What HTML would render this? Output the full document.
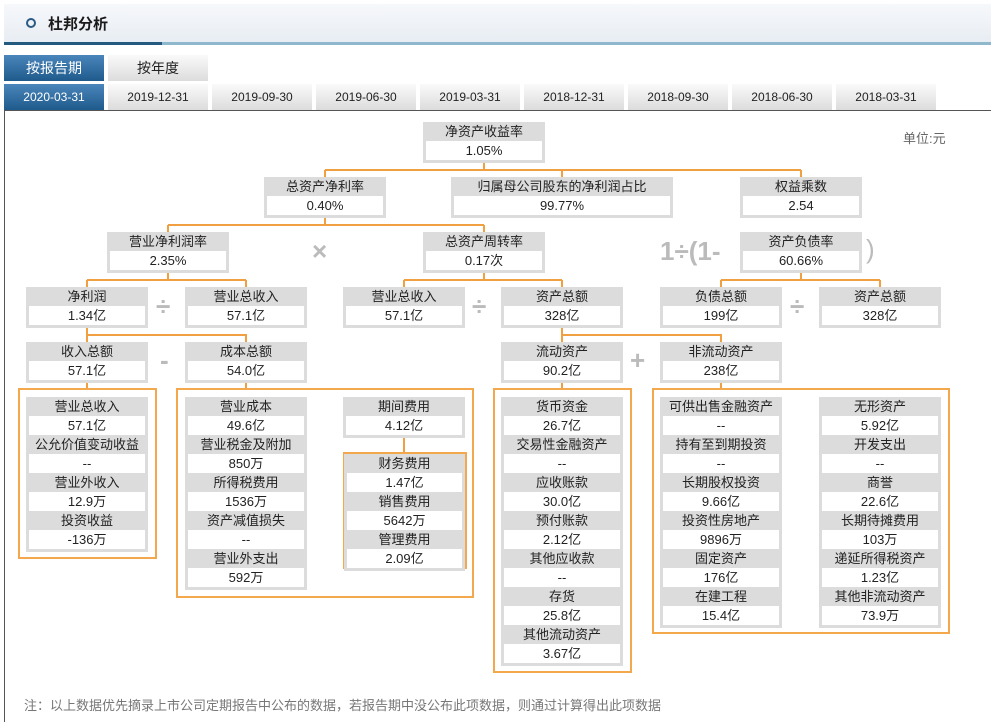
<!DOCTYPE html>
<html><head><meta charset="utf-8"><style>
*{margin:0;padding:0;box-sizing:border-box}
body{width:991px;height:728px;background:#fff;font-family:"Liberation Sans","Noto Sans CJK SC",sans-serif;font-size:13px;color:#222;position:relative;overflow:hidden}
.hd{position:absolute;left:4px;top:4px;width:987px;height:38px;background:linear-gradient(#f6f8fb,#e8edf3)}
.hd b{position:absolute;left:44px;top:9px;font-size:15px;color:#1a1a1a}
.hd i{position:absolute;left:22px;top:14px;width:10px;height:10px;border:2px solid #2a5a86;border-radius:50%}
.ln1{position:absolute;left:4px;top:42px;width:158px;height:3px;background:#245a80}
.ln2{position:absolute;left:162px;top:42px;width:829px;height:3px;background:#8fb8cc}
.t{position:absolute;height:26px;width:100px;text-align:center;line-height:26px;background:linear-gradient(#fafafa,#dcdcdc);color:#222;font-size:14px}
.t.s{background:linear-gradient(#4a86bb,#1f5a8c);color:#fff}
.t2{font-size:12px;height:26px;line-height:27px}
.main{position:absolute;left:4px;top:110px;width:987px;height:612px;border-left:1px solid #555;border-top:1px solid #555}
.b{position:absolute;width:122px;background:#dcdcdc;padding:0 3px 3px;text-align:center}
.b .l{height:19px;line-height:20px}
.b .v{height:19px;line-height:19px;background:#fff}
.op{position:absolute;font-size:26px;color:#bbb;font-weight:bold}
.ob{position:absolute;border:2px solid #f4a84e}
</style></head><body>
<div class="hd"><i></i><b>杜邦分析</b></div>
<div class="ln1"></div><div class="ln2"></div>
<div class="t s" style="left:4px;top:55px">按报告期</div>
<div class="t" style="left:108px;top:55px">按年度</div>
<div class="t t2 s" style="left:4px;top:84px">2020-03-31</div>
<div class="t t2" style="left:108px;top:84px">2019-12-31</div>
<div class="t t2" style="left:212px;top:84px">2019-09-30</div>
<div class="t t2" style="left:316px;top:84px">2019-06-30</div>
<div class="t t2" style="left:420px;top:84px">2019-03-31</div>
<div class="t t2" style="left:524px;top:84px">2018-12-31</div>
<div class="t t2" style="left:628px;top:84px">2018-09-30</div>
<div class="t t2" style="left:732px;top:84px">2018-06-30</div>
<div class="t t2" style="left:836px;top:84px">2018-03-31</div>
<div class="main"></div>
<div style="position:absolute;left:903px;top:128px;color:#666">单位:元</div>
<svg style="position:absolute;left:0;top:0" width="991" height="728"><g stroke="#f0a040" stroke-width="2" fill="none">
<path d="M484 162V170M325 170H801M325 170V177M562 170V177M801 170V177"/>
<path d="M325 217V225M168 225H484M168 225V232M484 225V232"/>
<path d="M168 272V280M87 280H246M87 280V287M246 280V287"/>
<path d="M484 272V280M404 280H562M404 280V287M562 280V287"/>
<path d="M801 272V280M721 280H880M721 280V287M880 280V287"/>
<path d="M87 327V335H246V342M87 335V342"/>
<path d="M562 327V335H721V342M562 335V342"/>
<path d="M87 382V389M246 382V389M562 382V389M721 382V389M404 435V452"/>
</g></svg>
<div class="b" style="left:423px;top:122px"><div class="l">净资产收益率</div><div class="v">1.05%</div></div>
<div class="b" style="left:264px;top:177px"><div class="l">总资产净利率</div><div class="v">0.40%</div></div>
<div class="b" style="left:451px;top:177px;width:222px"><div class="l">归属母公司股东的净利润占比</div><div class="v">99.77%</div></div>
<div class="b" style="left:740px;top:177px"><div class="l">权益乘数</div><div class="v">2.54</div></div>
<div class="b" style="left:107px;top:232px"><div class="l">营业净利润率</div><div class="v">2.35%</div></div>
<div class="b" style="left:423px;top:232px"><div class="l">总资产周转率</div><div class="v">0.17次</div></div>
<div class="b" style="left:740px;top:232px"><div class="l">资产负债率</div><div class="v">60.66%</div></div>
<div class="op" style="left:312px;top:236px">×</div>
<div class="op" style="left:660px;top:236px">1÷(1-</div>
<div class="op" style="left:866px;top:234px;font-weight:normal">)</div>
<div class="b" style="left:26px;top:287px"><div class="l">净利润</div><div class="v">1.34亿</div></div>
<div class="b" style="left:185px;top:287px"><div class="l">营业总收入</div><div class="v">57.1亿</div></div>
<div class="b" style="left:343px;top:287px"><div class="l">营业总收入</div><div class="v">57.1亿</div></div>
<div class="b" style="left:501px;top:287px"><div class="l">资产总额</div><div class="v">328亿</div></div>
<div class="b" style="left:660px;top:287px"><div class="l">负债总额</div><div class="v">199亿</div></div>
<div class="b" style="left:819px;top:287px"><div class="l">资产总额</div><div class="v">328亿</div></div>
<div class="op" style="left:156px;top:291px">÷</div>
<div class="op" style="left:472px;top:291px">÷</div>
<div class="op" style="left:790px;top:291px">÷</div>
<div class="b" style="left:26px;top:342px"><div class="l">收入总额</div><div class="v">57.1亿</div></div>
<div class="b" style="left:185px;top:342px"><div class="l">成本总额</div><div class="v">54.0亿</div></div>
<div class="b" style="left:501px;top:342px"><div class="l">流动资产</div><div class="v">90.2亿</div></div>
<div class="b" style="left:660px;top:342px"><div class="l">非流动资产</div><div class="v">238亿</div></div>
<div class="op" style="left:160px;top:345px">-</div>
<div class="op" style="left:630px;top:345px">+</div>
<div class="ob" style="left:18px;top:388px;width:139px;height:171px"></div>
<div class="ob" style="left:176px;top:388px;width:298px;height:210px"></div>
<div class="ob" style="left:493px;top:388px;width:139px;height:285px"></div>
<div class="ob" style="left:652px;top:388px;width:298px;height:246px"></div>
<div class="ob" style="left:343px;top:452px;width:124px;height:117px"></div>
<div class="b" style="left:26px;top:397px"><div class="l">营业总收入</div><div class="v">57.1亿</div><div class="l">公允价值变动收益</div><div class="v">--</div><div class="l">营业外收入</div><div class="v">12.9万</div><div class="l">投资收益</div><div class="v">-136万</div></div>
<div class="b" style="left:185px;top:397px"><div class="l">营业成本</div><div class="v">49.6亿</div><div class="l">营业税金及附加</div><div class="v">850万</div><div class="l">所得税费用</div><div class="v">1536万</div><div class="l">资产减值损失</div><div class="v">--</div><div class="l">营业外支出</div><div class="v">592万</div></div>
<div class="b" style="left:343px;top:397px"><div class="l">期间费用</div><div class="v">4.12亿</div></div>
<div class="b" style="left:344px;top:454px;width:121px"><div class="l">财务费用</div><div class="v">1.47亿</div><div class="l">销售费用</div><div class="v">5642万</div><div class="l">管理费用</div><div class="v">2.09亿</div></div>
<div class="b" style="left:501px;top:397px"><div class="l">货币资金</div><div class="v">26.7亿</div><div class="l">交易性金融资产</div><div class="v">--</div><div class="l">应收账款</div><div class="v">30.0亿</div><div class="l">预付账款</div><div class="v">2.12亿</div><div class="l">其他应收款</div><div class="v">--</div><div class="l">存货</div><div class="v">25.8亿</div><div class="l">其他流动资产</div><div class="v">3.67亿</div></div>
<div class="b" style="left:660px;top:397px"><div class="l">可供出售金融资产</div><div class="v">--</div><div class="l">持有至到期投资</div><div class="v">--</div><div class="l">长期股权投资</div><div class="v">9.66亿</div><div class="l">投资性房地产</div><div class="v">9896万</div><div class="l">固定资产</div><div class="v">176亿</div><div class="l">在建工程</div><div class="v">15.4亿</div></div>
<div class="b" style="left:819px;top:397px"><div class="l">无形资产</div><div class="v">5.92亿</div><div class="l">开发支出</div><div class="v">--</div><div class="l">商誉</div><div class="v">22.6亿</div><div class="l">长期待摊费用</div><div class="v">103万</div><div class="l">递延所得税资产</div><div class="v">1.23亿</div><div class="l">其他非流动资产</div><div class="v">73.9万</div></div>
<div style="position:absolute;left:24px;top:695px;color:#777;font-size:13px">注：以上数据优先摘录上市公司定期报告中公布的数据，若报告期中没公布此项数据，则通过计算得出此项数据</div>
</body></html>
